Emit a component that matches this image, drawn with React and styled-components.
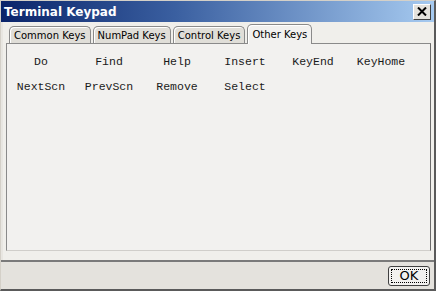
import React from "react";
import styled, { createGlobalStyle } from "styled-components";

const GlobalStyle = createGlobalStyle`
  html, body {
    margin: 0;
    padding: 0;
    background: #d4d0c8;
  }
`;

const Window = styled.div`
  width: 436px;
  height: 291px;
  box-sizing: border-box;
  display: flex;
  flex-direction: column;
  background: #e4e2dd;
  border-left: 1px solid #d4d0c8;
  border-top: 1px solid #d4d0c8;
  border-right: 2px solid #5a5a5a;
  border-bottom: 2px solid #5a5a5a;
  font-family: "DejaVu Sans", Verdana, sans-serif;
`;

const TitleBar = styled.div`
  height: 21px;
  display: flex;
  align-items: center;
  justify-content: space-between;
  padding: 0 3px 0 3px;
  background: linear-gradient(to right, #0a246a 0%, #3a5fa0 40%, #a6caf0 100%);
`;

const Title = styled.span`
  color: #fff;
  font-family: "DejaVu Sans", Verdana, sans-serif;
  font-weight: bold;
  font-size: 12px;
`;

const CloseButton = styled.div`
  width: 18px;
  height: 16px;
  box-sizing: border-box;
  background: #e4e2dd;
  border: 1px solid;
  border-color: #fff #404040 #404040 #fff;
  display: flex;
  align-items: center;
  justify-content: center;
`;

const Body = styled.div`
  flex: 1;
  display: flex;
  flex-direction: column;
  padding: 1px 3px 0 3px;
  background: #f0efeb;
  border-left: 2px solid #e8e6e1;
`;

const TabRow = styled.div`
  display: flex;
  align-items: flex-end;
  padding-left: 3px;
  gap: 2px;
  height: 20px;
`;

const Tab = styled.div`
  height: ${(p) => (p.$active ? "20px" : "17px")};
  box-sizing: border-box;
  padding: 0 4px;
  display: flex;
  align-items: center;
  font-size: 10px;
  color: #000;
  background: ${(p) => (p.$active ? "#f2f1ef" : "#e0ded8")};
  border: 1px solid #8a8a8a;
  border-bottom: none;
  border-radius: 5px 5px 0 0;
  margin-bottom: ${(p) => (p.$active ? "-1px" : "0")};
  position: relative;
  z-index: ${(p) => (p.$active ? 1 : 0)};
  box-shadow: inset 1px 1px 0 #fff;
`;

const Panel = styled.div`
  flex: 1;
  background: #f2f1ef;
  border: 1px solid #8a8a8a;
  border-right-color: #6a6a6a;
  border-bottom-color: #d0ceca;
  display: grid;
  grid-template-columns: repeat(6, 68px);
  grid-auto-rows: 25px;
  align-content: start;
  padding: 5px 0 0 0;
  margin-bottom: 9px;
`;

const Key = styled.div`
  font-family: "Liberation Mono", "Courier New", monospace;
  font-size: 11.5px;
  color: #1a1a1a;
  text-align: center;
  line-height: 25px;
`;

const Footer = styled.div`
  height: 27px;
  display: flex;
  align-items: center;
  justify-content: flex-end;
  padding-right: 4px;
  border-top: 2px solid #7a7a7a;
  background: #e4e2dd;
`;

const OkButton = styled.div`
  width: 42px;
  height: 20px;
  box-sizing: border-box;
  border: 1px solid #404040;
  border-radius: 3px;
  background: #f2f1ef;
  padding: 2px;
  display: flex;
`;

const OkFocus = styled.div`
  flex: 1;
  border: 1px dotted #000;
  display: flex;
  align-items: center;
  justify-content: center;
  font-size: 13px;
  color: #000;
  font-family: "DejaVu Sans", Verdana, sans-serif;
`;

const tabs = ["Common Keys", "NumPad Keys", "Control Keys", "Other Keys"];
const keys = [
  "Do", "Find", "Help", "Insert", "KeyEnd", "KeyHome",
  "NextScn", "PrevScn", "Remove", "Select",
];

export default function App() {
  return (
    <>
      <GlobalStyle />
      <Window>
        <TitleBar>
          <Title>Terminal Keypad</Title>
          <CloseButton>
            <svg width="10" height="9" viewBox="0 0 10 9">
              <path d="M1 0.5 L9 8.5 M9 0.5 L1 8.5" stroke="#000" strokeWidth="2" />
            </svg>
          </CloseButton>
        </TitleBar>
        <Body>
          <TabRow>
            {tabs.map((t) => (
              <Tab key={t} $active={t === "Other Keys"}>{t}</Tab>
            ))}
          </TabRow>
          <Panel>
            {keys.map((k) => (
              <Key key={k}>{k}</Key>
            ))}
          </Panel>
        </Body>
        <Footer>
          <OkButton>
            <OkFocus>OK</OkFocus>
          </OkButton>
        </Footer>
      </Window>
    </>
  );
}
